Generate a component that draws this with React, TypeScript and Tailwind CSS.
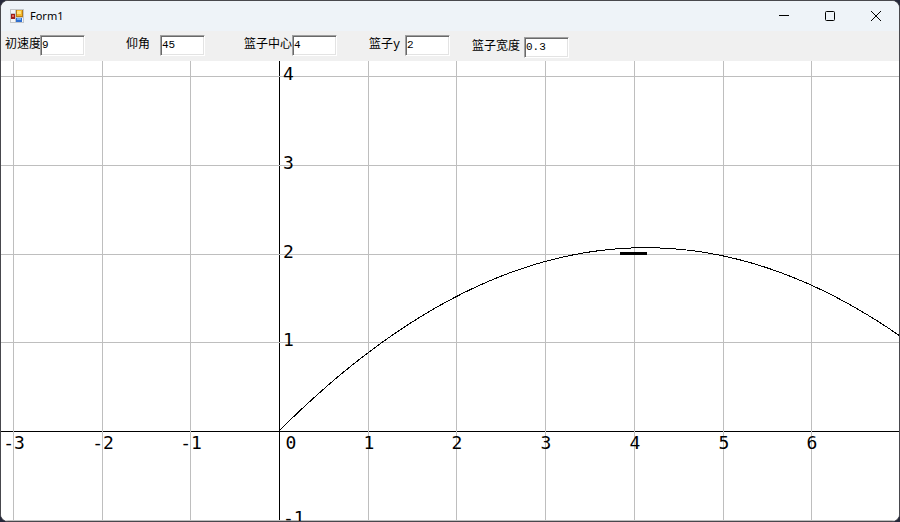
import React from "react";

const UNIT = 88.7;
const ORIGIN_X = 278;
const ORIGIN_Y = 370;
const SPAN = 24;
const GRAVITY = 9.8;

const px = (x: number) => Math.round(ORIGIN_X + x * UNIT);
const py = (y: number) => Math.round(ORIGIN_Y - y * UNIT);

function range(from: number, to: number) {
  return Array.from({ length: to - from + 1 }, (_, i) => from + i);
}

function trajectory(speed: number, degrees: number) {
  const a = (degrees * Math.PI) / 180;
  const points: string[] = [];
  for (let x = 0; x <= SPAN; x += 0.05) {
    const y = x * Math.tan(a) - (GRAVITY * x * x) / (2 * (speed * Math.cos(a)) ** 2);
    points.push(`${(ORIGIN_X + x * UNIT).toFixed(2)},${(ORIGIN_Y - y * UNIT).toFixed(2)}`);
  }
  return points.join(" ");
}

type Values = { speed: string; angle: string; center: string; height: string; width: string };

function Chart({ values }: { values: Values }) {
  const center = Number(values.center) || 0;
  const height = Number(values.height) || 0;
  const width = Number(values.width) || 0;
  return (
    <svg
      className="block min-h-0 w-full flex-1 bg-white font-['DejaVu_Sans_Mono',monospace] text-[18px]"
      shapeRendering="crispEdges"
      role="img"
      aria-label="Trajectory"
    >
      <rect x="0" y={ORIGIN_Y} width="100%" height="1" fill="#000" />
      <rect x={ORIGIN_X} y="0" width="1" height="100%" fill="#000" />
      {range(-3, SPAN).filter((n) => n !== 0).map((n) => (
        <rect key={n} x={px(n)} y="0" width="1" height="100%" fill="#bebebe" />
      ))}
      {range(-6, 4).filter((n) => n !== 0).map((n) => (
        <rect key={n} x="0" y={py(n)} width="100%" height="1" fill="#bebebe" />
      ))}
      {range(-3, 6).map((n) => (
        <text key={n} x={n === 0 ? px(0) + 12 : px(n) + 1} y={ORIGIN_Y + 18} textAnchor="middle">
          {n}
        </text>
      ))}
      {range(-1, 4).filter((n) => n !== 0).map((n) => (
        <text key={n} x={ORIGIN_X + 4} y={py(n) + 4}>
          {n}
        </text>
      ))}
      <polyline points={trajectory(Number(values.speed), Number(values.angle))} fill="none" stroke="#000" />
      <rect x={px(center - width / 2)} y={py(height) - 2} width={Math.round(width * UNIT)} height="3" fill="#000" />
    </svg>
  );
}

function FormIcon() {
  return (
    <svg width="14" height="14" viewBox="0 0 14 14" shapeRendering="crispEdges" aria-hidden="true">
      <rect width="14" height="14" fill="#c3c6c9" />
      <rect x="1" y="1" width="4" height="3" fill="#f4f6f8" />
      <rect x="1" y="10" width="4" height="3" fill="#f4f6f8" />
      <rect x="12" y="9" width="1" height="4" fill="#f4f6f8" />
      <rect x="6" y="1" width="7" height="7" fill="#b87c16" />
      <rect x="7" y="1" width="5" height="6" fill="#f5b82a" />
      <rect x="7" y="2" width="4" height="3" fill="#ffe27a" />
      <rect x="1" y="5" width="4" height="5" fill="#9c1f19" />
      <rect x="2" y="6" width="2" height="2" fill="#e8685c" />
      <rect x="6" y="9" width="6" height="4" fill="#2f6fd0" />
      <rect x="7" y="9" width="4" height="2" fill="#75b0f5" />
    </svg>
  );
}

function CaptionButton({ label, children }: { label: string; children: React.ReactNode }) {
  return (
    <button type="button" aria-label={label} className="flex h-full w-[46px] items-center justify-center hover:bg-black/5">
      <svg width="12" height="12" viewBox="0 0 12 12" fill="none" stroke="#000" aria-hidden="true">
        {children}
      </svg>
    </button>
  );
}

const fields: { key: keyof Values; label: string; labelClass: string; groupClass: string }[] = [
  { key: "speed", label: "初速度", labelClass: "w-[35px]", groupClass: "mr-[41px]" },
  { key: "angle", label: "仰角", labelClass: "w-[34px]", groupClass: "mr-[39px]" },
  { key: "center", label: "篮子中心", labelClass: "w-12", groupClass: "mr-8" },
  { key: "height", label: "篮子y", labelClass: "w-9", groupClass: "mr-[22px]" },
  { key: "width", label: "篮子宽度", labelClass: "w-[52px]", groupClass: "pt-0.5" },
];

export default function App() {
  const [values, setValues] = React.useState<Values>({
    speed: "9",
    angle: "45",
    center: "4",
    height: "2",
    width: "0.3",
  });

  return (
    <div className="h-screen bg-[#25283a]">
      <main className="flex h-full flex-col overflow-hidden rounded-lg border border-[#48484d] bg-white text-black">
        <header className="flex h-[30px] shrink-0 items-center bg-[#eef3f8] pl-[9px]">
          <FormIcon />
          <h1 className="ml-1.5 flex-1 font-['Noto_Sans',sans-serif] text-[11px]">Form1</h1>
          <div className="flex h-full">
            <CaptionButton label="Minimize">
              <path d="M1 5.5H11" />
            </CaptionButton>
            <CaptionButton label="Maximize">
              <rect x="1.5" y="1.5" width="9" height="9" rx="1" />
            </CaptionButton>
            <CaptionButton label="Close">
              <path d="M1 1L11 11M11 1L1 11" />
            </CaptionButton>
          </div>
        </header>
        <form className="flex h-[30px] shrink-0 items-start bg-[#f0f0f0] pt-1 pl-1 font-['Liberation_Mono','Noto_Sans_CJK_SC',monospace] text-xs">
          {fields.map((f) => (
            <div key={f.key} className={`flex items-start ${f.groupClass}`}>
              <label htmlFor={f.key} className={`whitespace-nowrap leading-5 ${f.labelClass}`}>
                {f.label}
              </label>
              <input
                id={f.key}
                value={values[f.key]}
                onChange={(e) => setValues({ ...values, [f.key]: e.target.value })}
                className="relative h-[21px] w-[45px] border border-t-[#a0a0a0] border-r-white border-b-white border-l-[#a0a0a0] bg-white px-px pb-0.5 text-[11px] shadow-[inset_1px_1px_#696969,inset_-1px_-1px_#e3e3e3] outline-none"
              />
            </div>
          ))}
        </form>
        <Chart values={values} />
      </main>
    </div>
  );
}
